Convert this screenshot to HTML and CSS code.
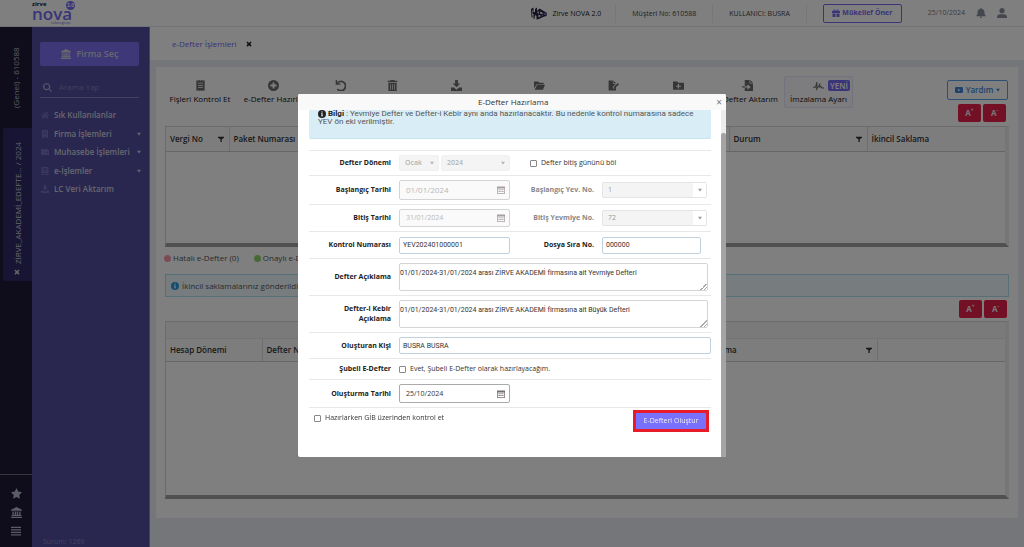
FILE: index.html
```html
<!DOCTYPE html>
<html lang="tr">
<head>
<meta charset="utf-8">
<title>Zirve NOVA</title>
<link rel="stylesheet" href="styles.css">
</head>
<body>
<svg class="sprite" aria-hidden="true">
  <symbol id="bank" viewBox="0 0 16 16"><path d="M8 0 16 4v1.500H0V4zM2 6.500h2v5h1.500v-5h2v5h1v-5h2v5H12v-5h2v5h1V13H1v-1.500h1zM0 14h16v2H0z"/></symbol>
  <symbol id="search" viewBox="0 0 16 16"><path d="M6.500 0a6.500 6.500 0 0 1 5.200 10.300L16 14.500 14.500 16l-4.200-4.300A6.500 6.500 0 1 1 6.500 0zm0 2.300a4.200 4.200 0 1 0 0 8.400 4.200 4.200 0 0 0 0-8.400z"/></symbol>
  <symbol id="home" viewBox="0 0 16 16"><path d="M8 1.500 16 8l-1 1.200L8 3.500 1 9.200 0 8zM8 5l5.500 4.500V15H9.500v-4h-3v4h-4V9.500zM12 2h2v3.500l-2-1.700z"/></symbol>
  <symbol id="building" viewBox="0 0 16 16"><path fill-rule="evenodd" d="M2 0h12v16H9.500v-3h-3v3H2zM5 2.500v2h2v-2zm4 0v2h2v-2zm-4 4v2h2v-2zm4 0v2h2v-2z"/></symbol>
  <symbol id="wallet" viewBox="0 0 16 16"><path fill-rule="evenodd" d="M1 2h13v2h2v10H0V3zm10.500 6v2h2V8z"/></symbol>
  <symbol id="book" viewBox="0 0 16 16"><path fill-rule="evenodd" d="M2 0h13v16H2L1 14V1zm2 3v2h8V3zm0 4v1.500h8V7zM3 12v2h10v-2z"/></symbol>
  <symbol id="download" viewBox="0 0 16 16"><path d="M6 0h4v5h3.500L8 10.500 2.500 5H6zM0 11h4.500L8 14l3.500-3H16v5H0z"/></symbol>
  <symbol id="star" viewBox="0 0 16 16"><path d="m8 0 2.500 5.200 5.500.8-4 4 1 5.800-5-2.800-5 2.800L4 10 0 6l5.500-.8z"/></symbol>
  <symbol id="bars" viewBox="0 0 16 16"><path d="M0 1h16v2.200H0zm0 4h16v2.200H0zm0 4h16v2.200H0zm0 4h16v2.200H0z"/></symbol>
  <symbol id="cross" viewBox="0 0 16 16"><path d="M4 1 8 5l4-4 3 3-4 4 4 4-3 3-4-4-4 4-3-3 4-4-4-4z"/></symbol>
  <symbol id="receipt" viewBox="0 0 16 16"><path fill-rule="evenodd" d="m2 0 2 1 2-1 2 1 2-1 2 1 2-1v16l-2-1-2 1-2-1-2 1-2-1-2 1zm2.500 4v1.200h7V4zm0 3.300v1.200h7V7.300zm0 3.300v1.200h7v-1.200z"/></symbol>
  <symbol id="plus" viewBox="0 0 16 16"><path fill-rule="evenodd" d="M8 0a8 8 0 1 1 0 16A8 8 0 0 1 8 0zM6.700 3.500v3.200H3.500v2.600h3.200v3.200h2.600V9.300h3.200V6.700H9.300V3.500z"/></symbol>
  <symbol id="undo" viewBox="0 0 16 16"><path d="M1 0h2v3.200A8 8 0 1 1 2.600 14l1.600-1.600A5.600 5.600 0 1 0 4.300 5H8v2H1z"/></symbol>
  <symbol id="trash" viewBox="0 0 16 16"><path fill-rule="evenodd" d="M5.500 0h5l1 1H15v2H1V1h3.500zM2 4h12v12H2zm2.500 2v8h1V6zm3 0v8h1V6zm3 0v8h1V6z"/></symbol>
  <symbol id="folder" viewBox="0 0 16 16"><path d="M0 2h6l2 2h6v2H4l-4 6zM4.500 7H16l-3 7H1z"/></symbol>
  <symbol id="sign" viewBox="0 0 18 16"><path d="M1 0h7v5h5l-5 5v3h3l2-2v5H1zM9 0l4 4H9zM9.500 10.500 16 4l2 2-6.500 6.500h-2z"/></symbol>
  <symbol id="folder-plus" viewBox="0 0 16 16"><path fill-rule="evenodd" d="M0 2h6l2 2h8v10H0zm7 3.500v2.700H4.500v1.600H7v2.700h1.800V9.800h2.700V8.200H8.800V5.500z"/></symbol>
  <symbol id="import" viewBox="0 0 16 16"><path fill-rule="evenodd" d="M4 0h7v5h5v11H4v-5h4v3l4.500-4L8 6v3H4zM0 9h4v2H0zM12 0l4 4h-4z"/></symbol>
  <symbol id="signature" viewBox="0 0 18 16"><path fill="none" stroke="currentColor" stroke-width="1.700" d="M0 11h4L6.500 2.500 6 14l5-8v5l2-1.500 1.500 2.500H18"/></symbol>
  <symbol id="info" viewBox="0 0 16 16"><path fill-rule="evenodd" d="M8 0a8 8 0 1 1 0 16A8 8 0 0 1 8 0zM6.700 2.800v2.400h2.600V2.800zM6 6.500V8h1v3H6v1.500h4V11H9.200V6.500z"/></symbol>
  <symbol id="filter" viewBox="0 0 16 16"><path d="M0 2h16v2.500L10 8.500V16H6.500V8.500L0 4.500z"/></symbol>
  <symbol id="caret" viewBox="0 0 8 8"><path d="M0 1.500h8L4 7z"/></symbol>
  <symbol id="gift" viewBox="0 0 16 16"><path fill-rule="evenodd" d="M0 4h3C1 1 5-1 8 3c3-4 7-2 5 1h3v4H0zm4.500-2-.2 2H7zm7 0L9 4h2.700zM1 9h6v7H1zm8 0h6v7H9z"/></symbol>
  <symbol id="bell" viewBox="0 0 16 16"><path d="M7 0h2v1.600c3 .4 4.500 2.400 4.500 5.400 0 3 1 4 2 5V13H.5v-1c1-1 2-2 2-5 0-3 1.500-5 4.500-5.400zM6 14h4a2 2 0 0 1-4 0z"/></symbol>
  <symbol id="user" viewBox="0 0 16 16"><path d="M8 0a4 4 0 1 1 0 8.400A4 4 0 0 1 8 0zM0 15c0-3 2-5 5-5h6c3 0 5 2 5 5v1H0z"/></symbol>
  <symbol id="play" viewBox="0 0 18 14"><path fill-rule="evenodd" d="M2 0h14l2 2v10l-2 2H2l-2-2V2zm5 4v6l5-3z"/></symbol>
  <symbol id="robot" viewBox="0 0 36 26"><path fill-rule="evenodd" d="M2 4l5-3v9h3V4l4-3v7l5-5 15 9-1 6-4 1-3 1-8 4-5 1v-7l-3-2-1 8-4-2v-8H7v9l-4-3zM17 8l-3 4 4 1zM21 9l-1 5 7-1zM17 15v6l5-3zM4 6v10l1-1V6z"/><path fill="#8a80d8" d="M28 12l5 1-1 3-5-1zM23 15l4 1-3 3z"/></symbol>
  <symbol id="calendar" viewBox="0 0 16 16"><path fill-rule="evenodd" d="M0 1h16v14l-1 1H1l-1-1zm1.500 4v9.500h13V5zM3 6.500h2.500v2H3zm3.700 0h2.500v2H6.700zm3.700 0h2.500v2h-2.500zM3 10h2.500v2H3zm3.700 0h2.500v2H6.700zm3.700 0h2.500v2h-2.500z"/></symbol>
</svg>

<div class="app">
  <header class="topbar">
    <div class="logo">
      <span class="logo-zirve">zirve</span>
      <span class="logo-nova">nova</span>
      <span class="logo-sub">teknogrup</span>
      <span class="logo-badge">2.0</span>
    </div>
    <div class="top-item product"><svg class="robot"><use href="#robot"/></svg>Zirve NOVA 2.0</div>
    <div class="top-item">Müşteri No: 610588</div>
    <div class="top-item">KULLANICI: BUSRA</div>
    <button class="refer" type="button"><svg class="i8"><use href="#gift"/></svg>Mükellef Öner</button>
    <span class="today">25/10/2024</span>
    <svg class="i10 muted"><use href="#bell"/></svg>
    <svg class="i10 muted"><use href="#user"/></svg>
  </header>

  <div class="columns">
    <aside class="rail">
      <div class="rail-tab general">(Genel) - 610588</div>
      <div class="rail-tab company"><svg class="i6"><use href="#cross"/></svg><span>ZİRVE_AKADEMİ_EDEFTE... / 2024</span></div>
      <div class="rail-tools">
        <svg class="i12"><use href="#star"/></svg>
        <svg class="i12"><use href="#bank"/></svg>
        <svg class="i10"><use href="#bars"/></svg>
      </div>
    </aside>

    <nav class="sidebar">
      <button class="choose" type="button"><svg class="i10"><use href="#bank"/></svg>Firma Seç</button>
      <label class="search"><svg class="i9"><use href="#search"/></svg><input type="text" placeholder="Arama Yap"></label>
      <ul class="menu">
        <li><svg class="i8"><use href="#home"/></svg><a href="#">Sık Kullanılanlar</a></li>
        <li><svg class="i8"><use href="#building"/></svg><a href="#">Firma İşlemleri</a><svg class="i4"><use href="#caret"/></svg></li>
        <li><svg class="i8"><use href="#wallet"/></svg><a href="#">Muhasebe İşlemleri</a><svg class="i4"><use href="#caret"/></svg></li>
        <li><svg class="i8"><use href="#book"/></svg><a href="#">e-İşlemler</a><svg class="i4"><use href="#caret"/></svg></li>
        <li><svg class="i8"><use href="#download"/></svg><a href="#">LC Veri Aktarım</a></li>
      </ul>
      <div class="version">Sürüm: 1269</div>
    </nav>

    <main class="main">
      <div class="tabs"><a href="#">e-Defter İşlemleri</a><svg class="i6"><use href="#cross"/></svg></div>
      <section class="panel">
        <div class="toolrow">
          <div class="tools">
            <button type="button"><svg><use href="#receipt"/></svg>Fişleri Kontrol Et</button>
            <button type="button"><svg><use href="#plus"/></svg>e-Defter Hazırla</button>
            <button type="button"><svg><use href="#undo"/></svg></button>
            <button type="button"><svg><use href="#trash"/></svg></button>
            <button type="button"><svg><use href="#download"/></svg></button>
            <button type="button"><svg><use href="#folder"/></svg></button>
            <button type="button"><svg><use href="#sign"/></svg></button>
            <button type="button"><svg><use href="#folder-plus"/></svg></button>
            <button type="button"><svg><use href="#import"/></svg>e-Defter Aktarım</button>
            <button type="button" class="boxed"><span class="icon-line"><svg><use href="#signature"/></svg><span class="new">YENİ</span></span>İmzalama Ayarı</button>
          </div>
          <div class="side">
            <button class="help" type="button"><svg class="i8"><use href="#play"/></svg>Yardım<svg class="i4"><use href="#caret"/></svg></button>
            <div class="zoomers"><button type="button">A<sup>+</sup></button><button type="button">A<sup>-</sup></button></div>
          </div>
        </div>

        <div class="grid first">
          <table>
            <colgroup><col class="c-tax"><col class="c-mid"><col class="c-state"><col></colgroup>
            <tr><th><div class="th">Vergi No<svg class="i6"><use href="#filter"/></svg></div></th><th>Paket Numarası</th><th><div class="th">Durum<svg class="i6"><use href="#filter"/></svg></div></th><th>İkincil Saklama</th></tr>
          </table>
        </div>

        <div class="legend"><span><i class="dot red"></i>Hatalı e-Defter (0)</span><span><i class="dot green"></i>Onaylı e-Defter</span></div>
        <div class="notice"><svg class="i8"><use href="#info"/></svg>İkincil saklamalarınız gönderildi</div>
        <div class="zoomers second"><button type="button">A<sup>+</sup></button><button type="button">A<sup>-</sup></button></div>

        <div class="grid last">
          <div class="group"></div>
          <table>
            <colgroup><col class="c-period"><col class="c-mid2"><col class="c-desc"><col></colgroup>
            <tr><th>Hesap Dönemi</th><th>Defter No</th><th><div class="th">Açıklama<svg class="i6"><use href="#filter"/></svg></div></th><th></th></tr>
          </table>
        </div>
      </section>
    </main>
  </div>
</div>

<div class="overlay">
  <div class="modal" role="dialog" aria-labelledby="dlg">
    <div class="modal-head"><h2 id="dlg">E-Defter Hazırlama</h2><button type="button" class="close">×</button></div>
    <div class="modal-body">
      <form class="form">
        <p class="hint"><svg class="i8"><use href="#info"/></svg> <b>Bilgi</b> : Yevmiye Defter ve Defter-i Kebir aynı anda hazırlanacaktır. Bu nedenle kontrol numarasına sadece YEV ön eki verilmiştir.</p>

        <div class="row r-term">
          <label class="name" for="month">Defter Dönemi</label>
          <div class="field pair">
            <span class="select flat month"><select id="month" disabled><option>Ocak</option></select><svg class="i4"><use href="#caret"/></svg></span>
            <span class="select flat year"><select aria-label="Yıl" disabled><option>2024</option></select><svg class="i4"><use href="#caret"/></svg></span>
          </div>
          <label class="check split"><input type="checkbox">Defter bitiş gününü böl</label>
        </div>

        <div class="row r-start">
          <label class="name" for="start">Başlangıç Tarihi</label>
          <span class="field date off big"><input id="start" type="text" value="01/01/2024" disabled><svg class="i8"><use href="#calendar"/></svg></span>
          <label class="name second off" for="startno">Başlangıç Yev. No.</label>
          <span class="select"><select id="startno" disabled><option>1</option></select><span class="drop"><svg class="i4"><use href="#caret"/></svg></span></span>
        </div>

        <div class="row r-end">
          <label class="name" for="end">Bitiş Tarihi</label>
          <span class="field date off"><input id="end" type="text" value="31/01/2024" disabled><svg class="i8"><use href="#calendar"/></svg></span>
          <label class="name second off" for="endno">Bitiş Yevmiye No.</label>
          <span class="select"><select id="endno" disabled><option>72</option></select><span class="drop"><svg class="i4"><use href="#caret"/></svg></span></span>
        </div>

        <div class="row r-control">
          <label class="name" for="control">Kontrol Numarası</label>
          <input class="field text" id="control" type="text" value="YEV202401000001">
          <label class="name second" for="fileno">Dosya Sıra No.</label>
          <input class="text fileno" id="fileno" type="text" value="000000">
        </div>

        <div class="row r-area">
          <label class="name" for="journal">Defter Açıklama</label>
          <textarea id="journal">01/01/2024-31/01/2024 arası ZİRVE AKADEMİ firmasına ait Yevmiye Defteri</textarea>
        </div>

        <div class="row r-area">
          <label class="name" for="ledger">Defter-i Kebir Açıklama</label>
          <textarea id="ledger">01/01/2024-31/01/2024 arası ZİRVE AKADEMİ firmasına ait Büyük Defteri</textarea>
        </div>

        <div class="row r-person">
          <label class="name" for="person">Oluşturan Kişi</label>
          <input class="text wide" id="person" type="text" value="BUSRA BUSRA">
        </div>

        <div class="row r-branch">
          <label class="name" for="branch">Şubeli E-Defter</label>
          <label class="check"><input id="branch" type="checkbox">Evet, Şubeli E-Defter olarak hazırlayacağım.</label>
        </div>

        <div class="row r-created">
          <label class="name" for="created">Oluşturma Tarihi</label>
          <span class="field date"><input id="created" type="text" value="25/10/2024"><svg class="i8"><use href="#calendar"/></svg></span>
        </div>

        <div class="row foot">
          <label class="check"><input type="checkbox">Hazırlarken GİB üzerinden kontrol et</label>
          <button type="button" class="create">E-Defteri Oluştur</button>
        </div>
      </form>
      <div class="scroll"><div class="thumb"></div></div>
    </div>
  </div>
</div>
</body>
</html>
```
FILE: styles.css
```css
* { box-sizing: border-box; }
body { margin: 0; font: 8px/12px "Open Sans", "Noto Sans", sans-serif; color: #222; }
button, input, select, textarea { font: inherit; color: inherit; margin: 0; }
button { padding: 0; border: 0; background: none; }
a { color: inherit; text-decoration: none; }
svg { fill: currentColor; flex: none; }
.sprite { display: none; }
.i4 { width: 4px; height: 4px; }
.i6 { width: 6px; height: 6px; }
.i8 { width: 8px; height: 8px; }
.i9 { width: 9px; height: 9px; }
.i10 { width: 10px; height: 10px; }
.i12 { width: 11px; height: 11px; }

.app { display: flex; flex-direction: column; height: 100vh; background: #ebedf5; }

/* top bar */
.topbar { flex: none; display: flex; align-items: center; height: 27px; padding-right: 17px; background: #fff; border-bottom: 1px solid #e4e6ee; font-size: 7px; }
.logo { position: relative; display: flex; flex-direction: column; width: 44px; margin: 0 auto 0 32px; color: #7468f0; }
.logo-zirve { color: #111; font-weight: 700; font-size: 6px; line-height: 6px; }
.logo-nova { font-weight: 600; font-size: 17px; line-height: 13px; }
.logo-sub { font-size: 4px; line-height: 6px; padding-left: 19px; }
.logo-badge { position: absolute; right: 1px; top: 0; width: 9px; height: 9px; border-radius: 50%; background: #7468f0; color: #fff; font: 700 5px/9px "Open Sans", sans-serif; text-align: center; }
.top-item { padding: 0 16px; line-height: 19px; border-right: 1px solid #eceef4; color: #444; }
.product { display: flex; align-items: center; gap: 4px; color: #222; padding-right: 14px; }
.robot { width: 18px; height: 13px; color: #2a2440; }
.refer { display: flex; align-items: center; justify-content: center; gap: 2px; width: 79px; height: 19px; margin: 0 26px 0 16px; border: 1px solid #7468f0; border-radius: 2px; color: #7468f0; font-weight: 700; }
.today { color: #777; margin-right: 11px; }
.muted { color: #8a8f9c; }
.muted + .muted { margin-left: 11px; }

.columns { flex: 1; display: flex; min-height: 0; }

/* narrow rail */
.rail { flex: none; display: flex; flex-direction: column; width: 32px; background: #1e1a38; color: #b8b8c4; }
.rail-tab { display: flex; align-items: center; writing-mode: vertical-rl; transform: rotate(180deg); white-space: nowrap; }
.general { height: 101px; justify-content: center; width: 32px; }
.company { height: 153px; width: 29px; margin-left: 3px; padding: 6px 0; gap: 5px; background: #2f2a66; border-radius: 0 2px 2px 0; color: #c8c8d0; }
.rail-tools { display: flex; flex-direction: column; align-items: center; gap: 8px; margin-top: auto; padding: 13px 0 11px; border-top: 1px solid #6c6c78; color: #b4b8cc; }

/* sidebar */
.sidebar { flex: none; display: flex; flex-direction: column; width: 118px; padding: 15px 8px 0; background: #524ea0; color: #cfcfdb; border-right: 1px solid #8884bc; }
.choose { display: flex; align-items: center; justify-content: center; gap: 6px; height: 24px; margin-right: 2px; background: #7c70f2; border-radius: 2px; font-weight: 600; font-size: 9px; }
.search { display: flex; align-items: center; gap: 7px; height: 21px; margin: 11px 2px 8px 0; padding: 0 3px; border-bottom: 1px solid #8a87bd; color: #aaa8cf; }
.search input { width: 100%; min-width: 0; border: 0; background: none; padding: 0; }
.search input::placeholder { color: #8583bd; opacity: 1; }
.menu { list-style: none; margin: 0; padding: 0; font-weight: 600; white-space: nowrap; }
.menu li { display: flex; align-items: center; gap: 5px; height: 18px; margin-bottom: 1px; padding: 0 0 0 1px; }
.menu li:nth-child(even) { height: 17px; }
.menu svg:first-child { color: #7470c0; }
.menu a { margin-right: auto; }
.version { margin-top: auto; padding: 0 3px; color: #8b89bb; font-size: 7px; line-height: 10px; }

/* page */
.main { flex: 1; min-width: 0; display: flex; flex-direction: column; }
.tabs { display: flex; align-items: center; gap: 9px; height: 33px; padding-left: 22px; background: #fff; color: #7468f0; font-weight: 500; }
.tabs svg { color: #222; }
.panel { flex: 1; display: flex; flex-direction: column; min-height: 0; margin: 7px 6px 29px; padding: 9px 8px 19px; background: #fff; }
.toolrow { display: flex; justify-content: space-between; height: 50px; }
.tools { display: grid; grid-template-columns: 72px 74px 60px 44px 84px 82px 66px 64px 74px 69px; height: 32px; }
.tools button { display: flex; flex-direction: column; align-items: center; gap: 2px; padding-top: 4px; white-space: nowrap; line-height: 12px; color: #111; }
.tools svg { width: 11px; height: 11px; color: #6c6c6c; }
.tools .boxed { border: 1px solid #e6e6fa; border-radius: 2px; padding-top: 2px; background: #fbfbff; }
.icon-line { display: flex; align-items: center; gap: 4px; height: 12px; padding-left: 26px; }
.new { padding: 0 2px; border-radius: 2px; background: #7468f0; color: #fff; font-weight: 600; line-height: 11px; }
.side { display: flex; flex-direction: column; align-items: flex-end; gap: 4px; padding: 4px 2px 0 0; }
.help { display: flex; align-items: center; justify-content: center; gap: 3px; width: 61px; height: 20px; border: 1px solid #5a9ee6; border-radius: 2px; color: #3a86dc; font-weight: 600; }
.zoomers { display: flex; gap: 2px; padding-right: 2px; }
.zoomers button { width: 23px; height: 18px; border-radius: 2px; background: #e8204a; color: #eee; font-weight: 700; line-height: 10px; }
.zoomers sup { font-size: 5px; line-height: 0; }
.zoomers.second { justify-content: flex-end; margin: 3px 3px 3px 0; padding: 0; }

.grid { margin: 0 1px; border: 1px solid #d6d6d6; border-right: 4px solid #ececec; border-bottom: 4px solid #a0a0a0; }
.grid.first { height: 121px; }
.grid.last { flex: 1; }
.group { height: 17px; background: #f4f4f4; border-bottom: 1px solid #e6e6e6; }
table { width: 100%; table-layout: fixed; border-collapse: collapse; }
th { height: 24px; padding: 0 5px 0 4px; text-align: left; font-weight: 600; color: #333; background: #fafafa; border-right: 1px solid #dcdcdc; border-bottom: 1px solid #ccc; white-space: nowrap; overflow: hidden; }
th:last-child { border-right: 0; }
.th { display: flex; align-items: center; justify-content: space-between; }
.last th { height: 22px; }
.c-tax { width: 63px; }
.c-mid { width: 500px; }
.c-state { width: 138px; }
.c-period { width: 96px; }
.c-mid2 { width: 435px; }
.c-desc { width: 180px; }
.legend { display: flex; gap: 15px; height: 27px; align-items: center; padding: 0 0 5px; color: #555; }
.legend span { display: flex; align-items: center; gap: 2px; }
.dot { width: 7px; height: 7px; border-radius: 50%; }
.red { background: #f59aa8; }
.green { background: #8fd36a; }
.notice { display: flex; align-items: center; gap: 3px; height: 23px; margin: 0 1px; padding: 0 5px; border: 1px solid #aee0f0; background: #eef9fe; color: #555; }
.notice svg { color: #2a9be0; }

/* dialog */
.overlay { position: fixed; inset: 0; display: flex; align-items: center; justify-content: center; padding-top: 4px; background: rgba(0, 0, 0, .5); }
.modal { width: 428px; border-radius: 2px; background: #fff; overflow: hidden; }
.modal-head { display: flex; align-items: center; height: 16px; padding: 0 4px 0 12px; background: #f9f9f9; }
.modal-head h2 { flex: 1; margin: 0; font-size: 8px; font-weight: 400; text-align: center; color: #333; }
.close { color: #777; font-size: 10px; line-height: 12px; }
.modal-body { display: flex; }
.form { flex: 1; min-width: 0; padding: 0 10px 22px 11px; }
.scroll { width: 5px; padding-top: 23px; background: #ececec; display: flex; }
.thumb { flex: 1; background: #a4a4a4; border-radius: 2px 2px 0 0; }
.hint { height: 29px; margin: 0 0 11px; padding: 0 9px; background: #d9edf6; border-bottom: 1px solid #c4e4ee; border-radius: 0 0 2px 2px; color: #555; font-family: Roboto, "Open Sans", sans-serif; line-height: 8px; }
.hint svg { color: #222; vertical-align: top; }
.hint b { color: #222; }
.row { display: flex; align-items: center; border-top: 1px solid #e8e8e8; font-size: 7px; line-height: 10px; }
.name { flex: none; width: 82px; margin-right: 8px; text-align: right; font-weight: 700; color: #222; }
.name.second { width: 77px; margin-left: 7px; }
.name.off { color: #888; }
.field { flex: none; width: 111px; }
.r-term { height: 25px; }
.r-start { height: 29px; }
.r-end, .r-control { height: 27px; }
.r-area { height: 37px; }
.r-area .name { padding-left: 20px; }
.r-person { height: 26px; }
.r-branch { height: 21px; }
.r-created { height: 28px; }
.pair { display: flex; gap: 2px; }
.select { display: flex; align-items: center; width: 105px; height: 16px; border: 1px solid #e4e4e4; border-radius: 2px; background: #f4f4f4; color: #999; }
.select select { flex: 1; min-width: 0; appearance: none; border: 0; background: none; padding: 0 5px; opacity: 1; }
.drop { display: flex; align-items: center; justify-content: center; align-self: stretch; width: 13px; background: #fff; }
.flat { padding-right: 4px; border-color: #f0f0f0; color: #b4b4b4; font-weight: 600; }
.month { width: 40px; }
.year { width: 69px; }
.check { display: flex; align-items: center; gap: 4px; color: #333; }
.check input { appearance: none; width: 7px; height: 7px; border: 1px solid #888; border-radius: 1px; background: #fff; }
.split { margin-left: 20px; }
.date { display: flex; align-items: center; height: 19px; padding-right: 4px; border: 1px solid #aaa; border-radius: 2px; color: #333; }
.date input { flex: 1; min-width: 0; border: 0; background: none; padding: 0 6px; }
.date svg { color: #776e6e; }
.date.off { height: 18px; border-color: #d4d4d4; background: #fafafa; color: #b8b8b8; }
.date.off.big { height: 20px; font-size: 8px; }
.date.off svg { color: #a8a0a0; }
.text, textarea { font-family: Roboto, "Open Sans", sans-serif; }
.text { height: 17px; border: 1px solid #c0d0dc; border-radius: 2px; padding: 0 3px; color: #333; background: #fff; }
.fileno { width: 99px; }
.wide { flex: 1; min-width: 0; }
textarea { width: 309px; height: 28px; padding: 4px 0; border: 1px solid #d4d4d4; border-radius: 2px; color: #333; line-height: 10px; resize: vertical; }
textarea::-webkit-resizer { background: linear-gradient(135deg, #fff 50%, #aaa 50%, #aaa 60%, #fff 60%, #fff 72%, #aaa 72%, #aaa 82%, #fff 82%) right bottom / 7px 7px no-repeat; }
.foot { align-items: flex-start; justify-content: space-between; padding: 2px 2px 0 5px; height: 28px; }
.foot .check { height: 16px; }
.create { width: 76px; height: 22px; border: 3px solid #e81c28; background: #7a70ff; color: #eee; }
```
